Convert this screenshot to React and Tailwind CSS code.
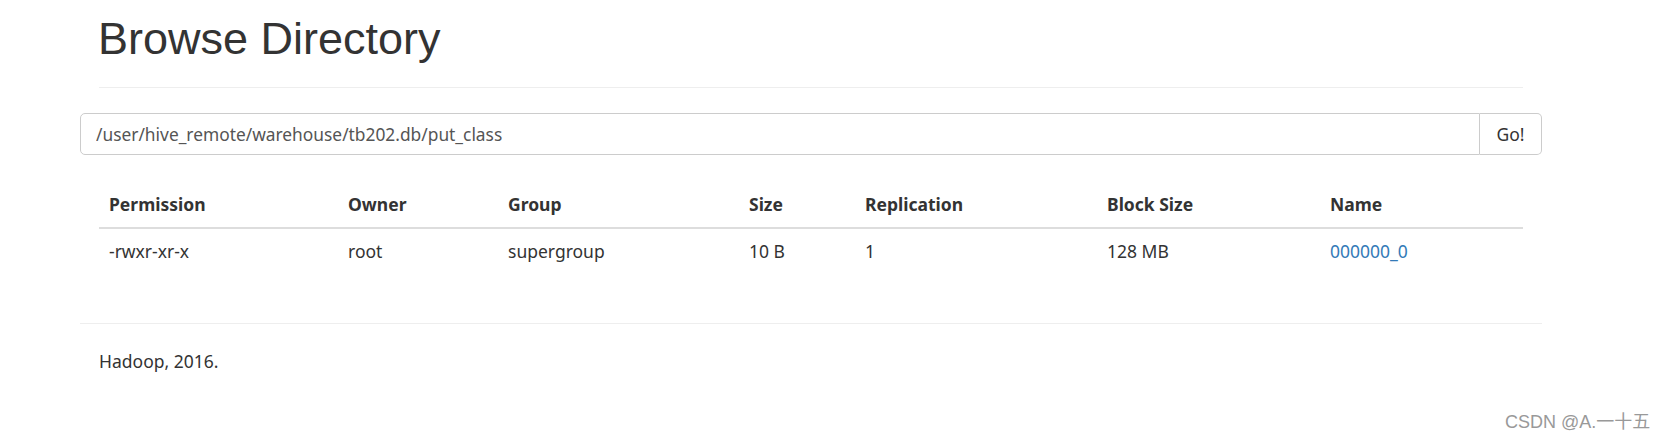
import React from "react";

const cols = [
  { name: "Permission", w: "w-[239px]" },
  { name: "Owner", w: "w-[160px]" },
  { name: "Group", w: "w-[241px]" },
  { name: "Size", w: "w-[116px]" },
  { name: "Replication", w: "w-[242px]" },
  { name: "Block Size", w: "w-[223px]" },
  { name: "Name", w: "" },
];

const row = ["-rwxr-xr-x", "root", "supergroup", "10 B", "1", "128 MB"];

export default function App() {
  return (
    <div className="relative min-h-[442px] w-full bg-white text-[#333] font-['Noto_Sans',sans-serif] text-[17.5px] leading-[25px]">
      <div className="ml-[80px] w-[1462px]">
        <div className="px-[19px]">
          <div className="pt-[14px] pb-[11px] border-b border-[#eee]">
            <h1 className="-ml-[1px] font-['Liberation_Sans',Arial,sans-serif] text-[45px] leading-[49.5px] font-normal mb-[12.5px]">
              Browse Directory
            </h1>
          </div>
        </div>

        <div className="mt-[25px] flex h-[42px]">
          <input
            readOnly
            value="/user/hive_remote/warehouse/tb202.db/put_class"
            className="flex-1 h-full rounded-l-[5px] border border-[#ccc] px-[15px] text-[17.35px] text-[#555] outline-none font-['Noto_Sans',sans-serif]"
          />
          <button className="w-[62px] h-full rounded-r-[5px] border border-l-0 border-[#ccc] bg-white text-[17.5px] text-[#333]">
            Go!
          </button>
        </div>

        <div className="px-[19px] mt-[27px]">
          <table className="w-full table-fixed border-collapse">
            <thead>
              <tr className="border-b-[2.5px] border-[#ddd]">
                {cols.map((c) => (
                  <th key={c.name} className={`${c.w} text-left font-bold px-[10px] py-[10px]`}>
                    {c.name}
                  </th>
                ))}
              </tr>
            </thead>
            <tbody>
              <tr>
                {row.map((v, i) => (
                  <td key={i} className="px-[10px] py-[10px]">
                    {v}
                  </td>
                ))}
                <td className="px-[10px] py-[10px]">
                  <a className="text-[#337ab7]" href="#">000000_0</a>
                </td>
              </tr>
            </tbody>
          </table>
        </div>

        <div className="mt-[49px] border-t border-[#eee]"></div>
        <div className="px-[19px] pt-[25px]">
          <p>Hadoop, 2016.</p>
        </div>
      </div>

      <div className="absolute left-[1505px] top-[410px] text-[18px] leading-[24px] text-[#999] font-['Liberation_Sans','Noto_Sans_CJK_SC',sans-serif]">
        CSDN @A.一十五
      </div>
    </div>
  );
}
